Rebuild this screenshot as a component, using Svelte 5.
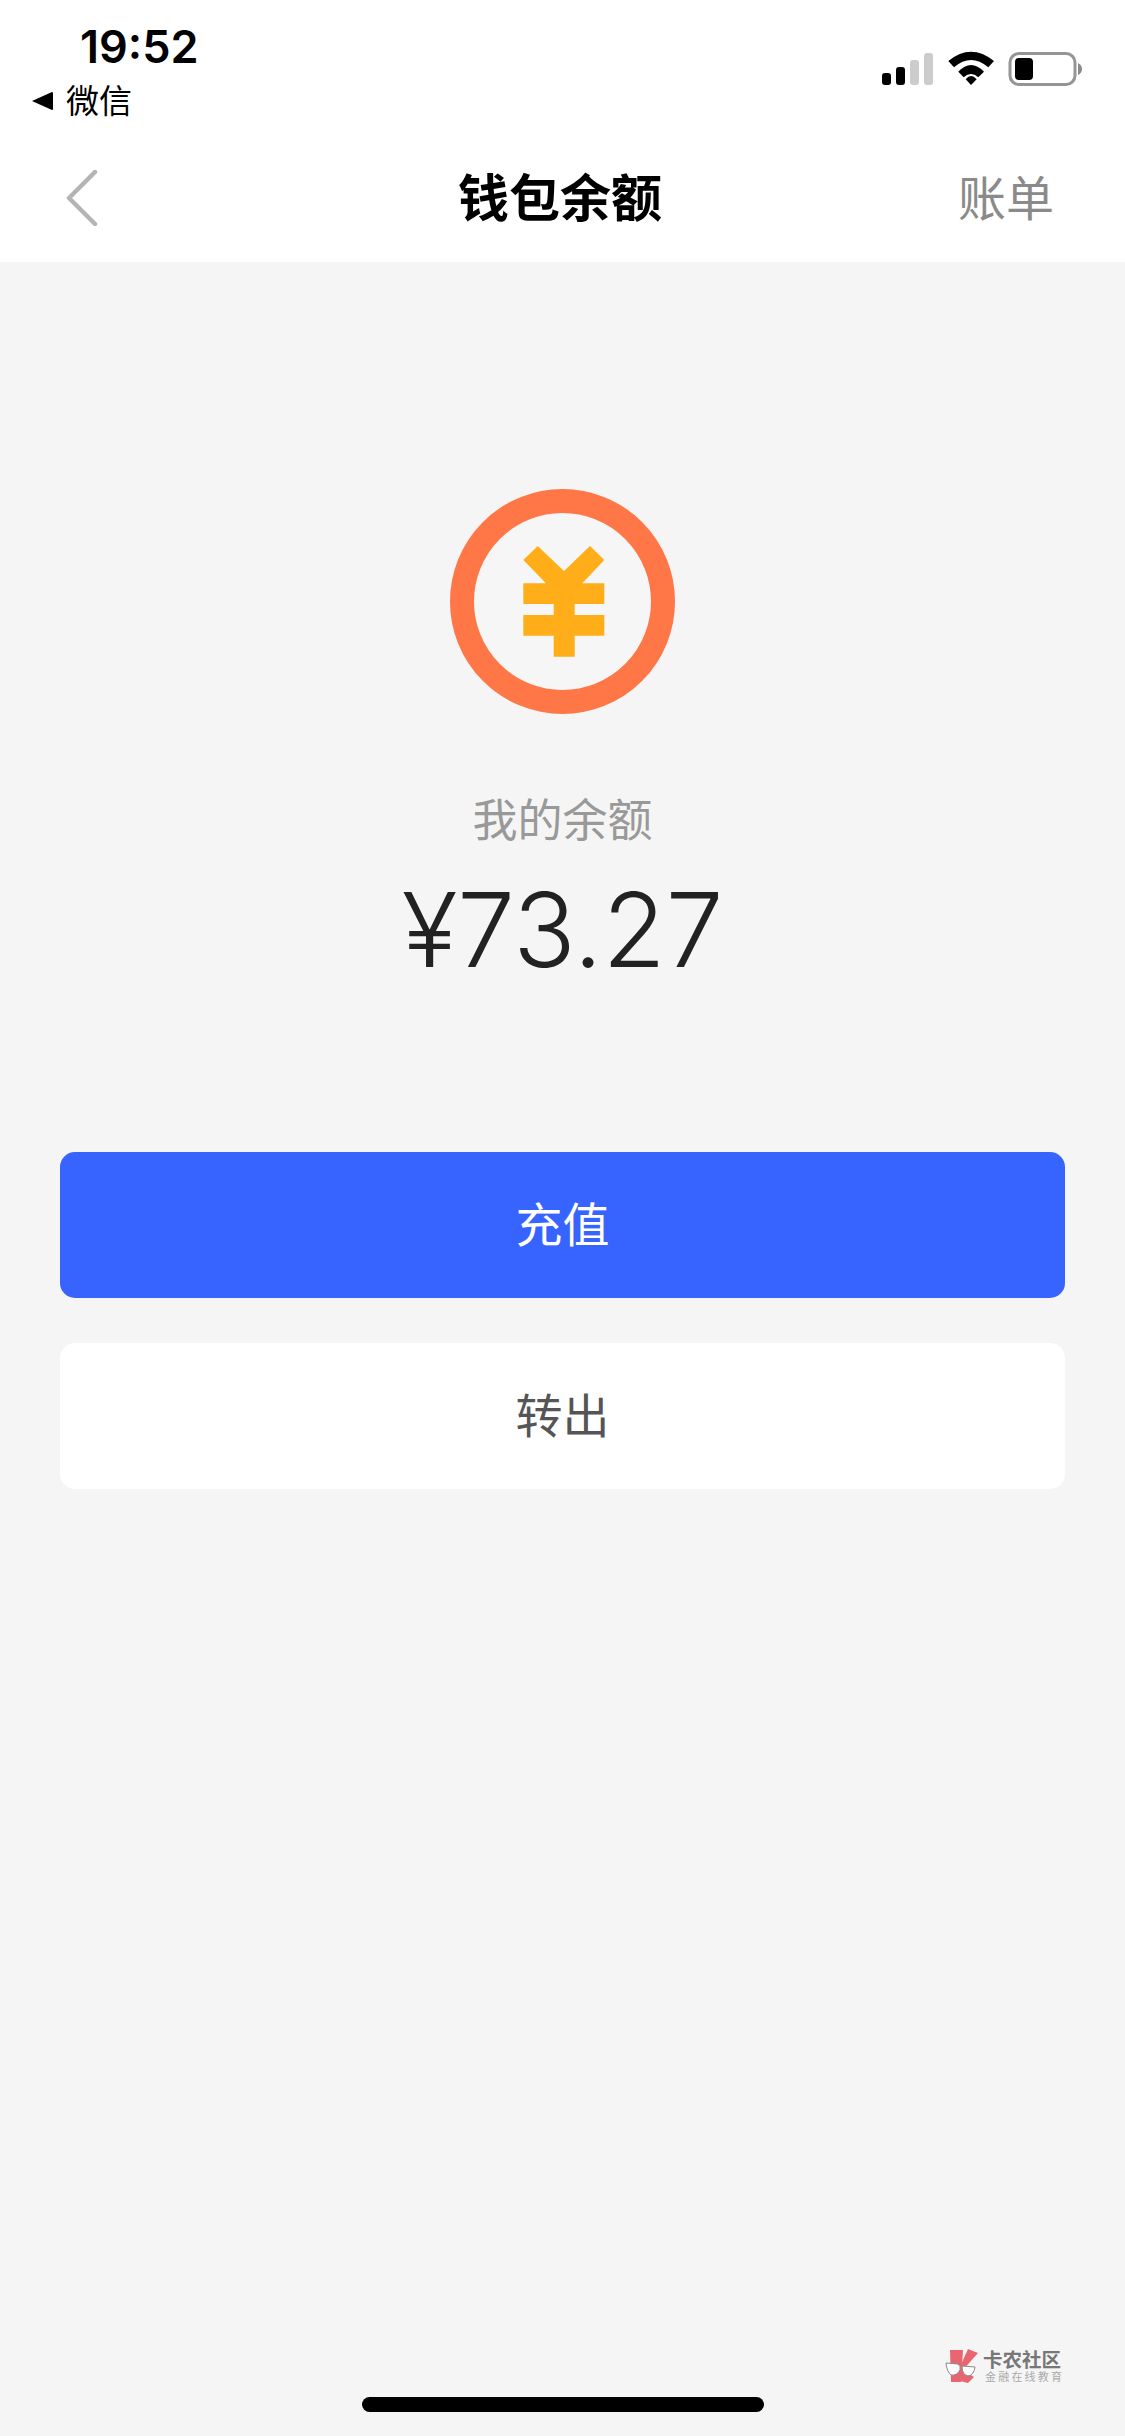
<script>
	const amount = "¥73.27";
</script>

<div class="page">
	<header class="top">
		<div class="status">
			<div class="status-left">
				<span class="time">19:52</span>
				<span class="back-app">
					<svg class="tri" viewBox="0 0 21 20" width="21" height="20"><path d="M0 10 L20 1 Q21 1 21 2 L21 18 Q21 19 20 19 Z" fill="#000" /></svg>
					微信
				</span>
			</div>
			<svg class="status-icons" viewBox="0 0 202 38" width="202" height="38">
				<rect x="0" y="23" width="9" height="12" rx="3" fill="#000" />
				<rect x="14" y="17" width="9" height="18" rx="3" fill="#000" />
				<rect x="28" y="10" width="9" height="25" rx="3" fill="#ccc" />
				<rect x="42" y="3" width="9" height="32" rx="3" fill="#ccc" />
				<path d="M66.3 11 Q89 -7.6 112 11 L106.3 17.3 Q89 2.7 72 17.3 Z" fill="#000" />
				<path d="M76.3 21.7 Q89 8.3 102 21.7 L96.3 27.3 Q89 20.7 81.7 27.3 Z" fill="#000" />
				<path d="M83.7 29.3 Q89 22.5 94.7 29.3 L89 35 Z" fill="#000" />
				<rect x="128" y="3.5" width="65" height="31" rx="9" fill="none" stroke="#959595" stroke-width="3" />
				<rect x="133" y="8" width="18" height="22" rx="4" fill="#000" />
				<path d="M196 13 Q200 15 200 19 Q200 23 196 25 Z" fill="#8a8a8a" />
			</svg>
		</div>
		<nav class="nav">
			<svg class="chevron" viewBox="0 0 32 56" width="32" height="56"><path d="M29 2 L3 28 L29 54" fill="none" stroke="#b4b4b4" stroke-width="4.5" stroke-linecap="round" stroke-linejoin="round" /></svg>
			<h1 class="title">钱包余额</h1>
			<span class="bill">账单</span>
		</nav>
	</header>

	<main class="content">
		<svg class="coin" viewBox="0 0 225 225" width="225" height="225">
			<circle cx="112.5" cy="112.5" r="100.5" fill="#f6f6f6" stroke="#ff7647" stroke-width="24" />
			<path d="M87.7 57 L114 82 L140 57 L154.3 71 L132.3 94.3 L154.3 94.3 L154.3 115 L124.7 115 L124.7 126 L154.3 126 L154.3 146.7 L124.7 146.7 L124.7 167.7 L103.7 167.7 L103.7 146.7 L73.3 146.7 L73.3 126 L103.7 126 L103.7 115 L73.3 115 L73.3 94.3 L96 94.3 L73.3 71 Z" fill="#ffae1a" />
		</svg>
		<p class="label">我的余额</p>
		<p class="amount">{amount}</p>
		<button class="btn primary">充值</button>
		<button class="btn secondary">转出</button>
	</main>

	<div class="watermark">
		<svg viewBox="0 0 34 35" width="34" height="35">
			<path d="M5 1 L18 1 L16 33 L6 33 Z" fill="#e8666f" />
			<path d="M23 0 L33 4 L18 21 L15 18 Z" fill="#e8666f" />
			<path d="M16 20 L29 28 L23 34 L15 32 Z" fill="#e8666f" />
			<path d="M1 14 L13 15 Q16 17 15 21 Q12 27 6 26 Q2 23 1 14 Z M17 17 L30 18 Q29 26 23 27 Q17 26 17 17 Z" fill="#fff" stroke="#8a8a8a" stroke-width="1" />
		</svg>
		<div class="mark-text">
			<span class="mark-name">卡农社区</span>
			<span class="mark-sub">金融在线教育</span>
		</div>
	</div>

	<div class="home-bar"></div>
</div>

<style>
	:global(body) {
		margin: 0;
		background: #f5f5f5;
	}

	.page {
		position: relative;
		display: flex;
		flex-direction: column;
		width: 1125px;
		height: 2436px;
		overflow: hidden;
		background: #f5f5f5;
		font-family: "Noto Sans CJK SC", sans-serif;
	}

	.top {
		background: #fff;
		height: 262px;
		box-sizing: border-box;
	}

	.status {
		display: flex;
		justify-content: space-between;
		height: 128px;
		padding: 22px 41px 0 32px;
		box-sizing: border-box;
	}

	.status-left {
		display: flex;
		flex-direction: column;
	}

	.time {
		margin-left: 48px;
		font-family: Inter, sans-serif;
		font-size: 45px;
		font-weight: 600;
		line-height: 50px;
		color: #000;
	}

	.back-app {
		display: flex;
		align-items: center;
		gap: 13px;
		margin-top: 5px;
		font-size: 33px;
		line-height: 44px;
		color: #000;
	}

	.tri {
		margin-top: 4px;
	}

	.status-icons {
		margin-top: 28px;
	}

	.nav {
		display: grid;
		grid-template-columns: 1fr auto 1fr;
		align-items: center;
		padding: 0 71px 0 66px;
		height: 134px;
	}

	.chevron {
		margin-top: 5px;
	}

	.title {
		margin: 0;
		font-size: 51px;
		font-weight: 700;
		color: #000;
	}

	.bill {
		justify-self: end;
		font-size: 48px;
		font-weight: 400;
		color: #8a8a8a;
	}

	.content {
		display: flex;
		flex-direction: column;
		align-items: center;
		padding: 227px 60px 0;
	}

	.coin {
		display: block;
	}

	.label {
		margin: 74px 0 0;
		font-size: 45px;
		line-height: 60px;
		font-weight: 400;
		color: #999;
	}

	.amount {
		margin: 22px 0 0;
		font-family: Inter, sans-serif;
		font-size: 103px;
		line-height: 120px;
		font-weight: 350;
		color: #222;
	}

	.btn {
		display: block;
		width: 100%;
		height: 146px;
		padding: 0 0 8px;
		border: none;
		border-radius: 15px;
		font-family: inherit;
		font-size: 47px;
		font-weight: 400;
	}

	.primary {
		margin-top: 162px;
		background: #3764ff;
		color: #fff;
	}

	.secondary {
		margin-top: 45px;
		background: #fff;
		color: #555;
	}

	.watermark {
		position: absolute;
		left: 945px;
		top: 2349px;
		display: flex;
		gap: 4px;
	}

	.mark-text {
		display: flex;
		flex-direction: column;
		font-family: "Liberation Sans", "Noto Sans CJK SC", sans-serif;
	}

	.mark-name {
		font-size: 19.5px;
		line-height: 22px;
		font-weight: 700;
		color: #777;
	}

	.mark-sub {
		margin-left: 2px;
		font-size: 11px;
		line-height: 13px;
		letter-spacing: 2.2px;
		white-space: nowrap;
		color: #aaa;
	}

	.home-bar {
		position: absolute;
		left: 362px;
		top: 2397px;
		width: 402px;
		height: 15px;
		border-radius: 8px;
		background: #000;
	}
</style>
